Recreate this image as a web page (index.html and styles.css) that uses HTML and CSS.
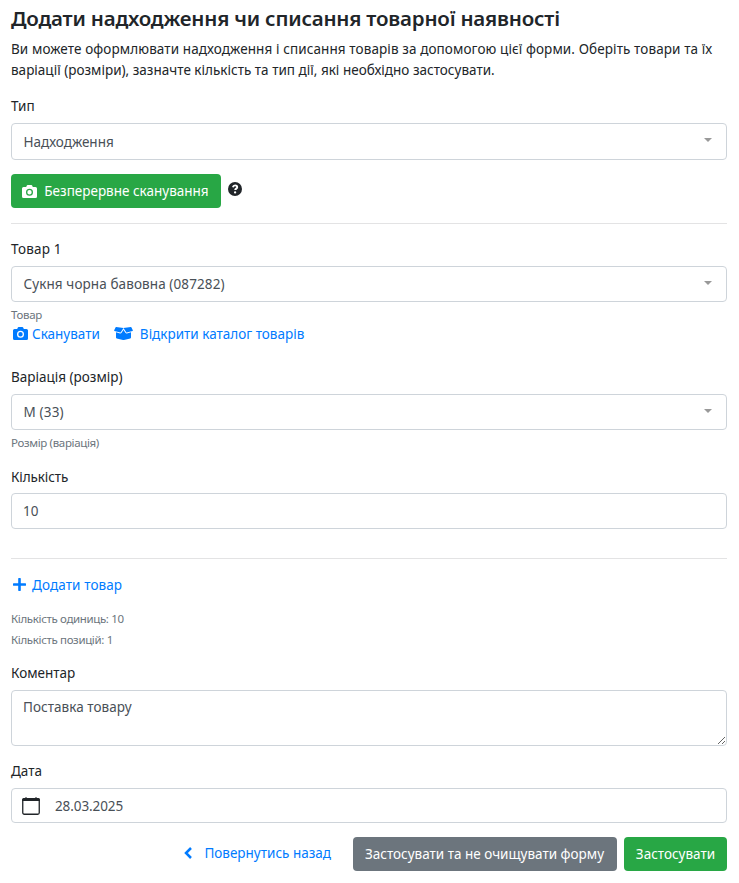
FILE: index.html
```html
<!DOCTYPE html>
<html lang="uk">
<head>
<meta charset="utf-8">
<title>Додати надходження чи списання</title>
<link rel="stylesheet" href="styles.css">
</head>
<body>
<svg class="sprite" aria-hidden="true">
  <symbol id="camera" viewBox="0 0 15 13"><path fill-rule="evenodd" d="M1.500 2h2.700l.5-1.300Q5 0 5.700 0h3.600q.7 0 1 .7l.5 1.300h2.700q1.500 0 1.500 1.500v8q0 1.500-1.500 1.500h-12Q0 13 0 11.500v-8Q0 2 1.500 2zM7.500 3.800a3.500 3.500 0 1 0 0 7 3.500 3.500 0 0 0 0-7zm0 1.300a2.200 2.200 0 1 1 0 4.400 2.200 2.200 0 0 1 0-4.400z"/></symbol>
  <symbol id="box" viewBox="0 0 640 512"><path d="M425.700 256c-16.900 0-32.800-9-41.400-23.400L320 126l-64.200 106.600c-8.700 14.500-24.600 23.500-41.500 23.500-4.500 0-9-.6-13.300-1.900L64 215v178c0 14.700 10 27.500 24.200 31l216.200 54.100c10.200 2.500 20.900 2.500 31 0L551.800 424c14.200-3.600 24.200-16.400 24.200-31V215l-137 39.100c-4.300 1.300-8.800 1.900-13.300 1.900zm212.600-112.200L586.800 41c-3.100-6.200-9.800-9.800-16.700-8.900L320 64l91.700 152.100c3.800 6.300 11.400 9.300 18.500 7.300l197.900-56.500c9.900-2.900 14.700-13.900 10.200-23.100zM53.200 41L1.700 143.800c-4.600 9.200.3 20.200 10.100 23l197.900 56.500c7.100 2 14.700-1 18.500-7.300L320 64 69.800 32.100c-6.900-.8-13.500 2.700-16.600 8.900z"/></symbol>
</svg>
<main class="page">
  <h1 class="title"><span>Додати надходження чи списання товарної наявності</span></h1>
  <p class="intro"><span class="intro-a">Ви можете оформлювати надходження і списання товарів за допомогою цієї форми. Оберіть товари та їх</span><br><span class="intro-b">варіації (розміри), зазначте кількість та тип дії, які необхідно застосувати.</span></p>

  <label class="label">Тип</label>
  <div class="control select select-tall"><span>Надходження</span><i class="caret"></i></div>

  <div class="scan-row">
    <button class="btn btn-green scan-btn"><svg class="cam"><use href="#camera"/></svg><span>Безперервне сканування</span></button>
    <svg class="help" viewBox="0 0 14 14"><circle cx="7" cy="7" r="7"/><path d="M4.900 5.200C5.200 3.900 6 3.400 7.100 3.400c1.200 0 2.100.7 2.100 1.800 0 1.500-2 1.400-2 2.900"/><circle class="dot" cx="7.100" cy="10.400" r="1.150"/></svg>
  </div>
  <hr>

  <label class="label t-num">Товар 1</label>
  <div class="control select"><span class="t-product">Сукня чорна бавовна (087282)</span><i class="caret"></i></div>
  <small class="hint">Товар</small>
  <div class="links">
    <a class="link"><svg class="cam"><use href="#camera"/></svg><span>Сканувати</span></a>
    <a class="link"><svg class="box"><use href="#box"/></svg><span>Відкрити каталог товарів</span></a>
  </div>

  <label class="label">Варіація (розмір)</label>
  <div class="control select"><span class="t-num">M (33)</span><i class="caret"></i></div>
  <small class="hint hint-size">Розмір (варіація)</small>

  <label class="label label-qty">Кількість</label>
  <div class="control input"><span>10</span></div>
  <hr class="hr-low">

  <a class="link add"><svg class="plus" viewBox="0 0 13 13"><path d="M6.500 1v11M1 6.500h11"/></svg><span class="t-add">Додати товар</span></a>
  <div class="totals"><small>Кількість одиниць: 10</small><small>Кількість позицій: 1</small></div>

  <label class="label">Коментар</label>
  <textarea class="control comment" spellcheck="false">Поставка товару</textarea>

  <label class="label">Дата</label>
  <div class="control input date"><svg class="calendar" viewBox="0 0 18 18"><path class="top" d="M0 4V3q0-2 2-2h1.500V0h1v1h9V0h1v1H16q2 0 2 2v1z"/><rect x=".75" y="1.750" width="16.500" height="15.500" rx="1.500"/></svg><span class="t-date">28.03.2025</span></div>

  <div class="actions">
    <a class="link"><svg class="chev" viewBox="0 0 8 12"><path d="M7 1 2 6l5 5"/></svg><span>Повернутись назад</span></a>
    <button class="btn btn-gray"><span>Застосувати та не очищувати форму</span></button>
    <button class="btn btn-green apply"><span>Застосувати</span></button>
  </div>
</main>
</body>
</html>
```
FILE: styles.css
```css
* { box-sizing: border-box; }
body { margin: 0; background: #fff; color: #212529; font: 13.5px/21px "Noto Sans", "Open Sans", sans-serif; }
.sprite { display: none; }
.page { width: 739px; height: 883px; padding: 5px 12px 0 11px; overflow: hidden; white-space: nowrap; }
.title { margin: 0; height: 34px; font-size: 20.5px; font-weight: 600; line-height: 26px; letter-spacing: -.2px; }
.intro { margin: 0 0 15px; }
.intro-a { letter-spacing: .1px; }
.intro-b { letter-spacing: .01px; }
.label { display: block; height: 27px; }
.t-num { letter-spacing: .15px; }
.t-product { letter-spacing: .1px; }
.t-add { letter-spacing: .1px; }
.t-date { letter-spacing: -.1px; }
.control { display: flex; align-items: center; width: 100%; height: 36px; border: 1px solid #ced4da; border-radius: 4px; color: #495057; background: #fff; }
.select { justify-content: space-between; padding: 0 14px 0 11.5px; }
.select-tall { height: 37px; padding-top: 1px; }
.caret { margin-top: -3px; border: 4px solid transparent; border-top: 4px solid #999; border-bottom: 0; }
.select-tall .caret { margin-top: -5px; }
.scan-row { display: flex; margin: 14px 0 15px; }
.btn { display: flex; align-items: center; justify-content: center; height: 34px; padding: 0; border: 0; border-radius: 4px; color: #fff; font: inherit; }
.btn-green { background: #28a745; }
.btn-gray { width: 264px; margin-left: 22px; padding-right: 1px; background: #6c757d; }
.scan-btn { width: 210px; padding-right: 1px; }
.scan-btn .cam { margin-right: 7px; }
.cam { width: 15px; height: 13px; fill: currentColor; flex: none; }
.help { width: 14px; height: 14px; margin: 8px 0 0 7px; fill: #212529; }
.help path { fill: none; stroke: #fff; stroke-width: 1.9; }
.help .dot { fill: #fff; }
hr { height: 1px; margin: 0 0 15px; border: 0; background: #e3e3e4; }
.hint { display: block; height: 22px; padding-top: 3px; color: #6c757d; font-size: 11.5px; line-height: 20px; letter-spacing: -.35px; }
.links { display: flex; height: 43px; gap: 13px; }
.link { display: flex; height: 21px; align-items: center; color: #007bff; }
.link .cam { margin: -3px 4px 0 2px; }
.box { width: 19px; height: 15px; margin: -3px 7px 0 1px; fill: currentColor; }
.hint-size { height: 37px; }
.input { padding: 1px 11px 0; }
.label-qty { height: 26px; letter-spacing: -.1px; }
.hr-low { margin: 29px 0 16px; }
.plus { width: 13px; height: 13px; margin: -3px 6px 0 2px; }
.plus path { fill: none; stroke: currentColor; stroke-width: 2.6; stroke-linecap: round; }
.totals { display: flex; flex-direction: column; margin: 12px 0 13px; color: #6c757d; font-size: 11.5px; letter-spacing: -.35px; }
.totals small { font-size: inherit; }
.comment { height: 56px; margin: 0 0 15px; padding: 6px 11px; font: inherit; letter-spacing: .05px; resize: vertical; overflow: hidden; outline: 0; }
.date { height: 35px; padding-left: 10px; }
.calendar { width: 18px; height: 18px; margin-right: 15px; }
.calendar rect { fill: none; stroke: #212529; stroke-width: 1.3; }
.calendar .top { fill: #212529; }
.actions { display: flex; justify-content: flex-end; align-items: center; margin-top: 14px; }
.actions .link { height: 23px; padding-bottom: 2px; }
.chev { width: 8px; height: 12px; margin: -1px 12px 0 0; }
.chev path { fill: none; stroke: currentColor; stroke-width: 2.5; }
.apply { width: 103px; margin-left: 7px; }
```
